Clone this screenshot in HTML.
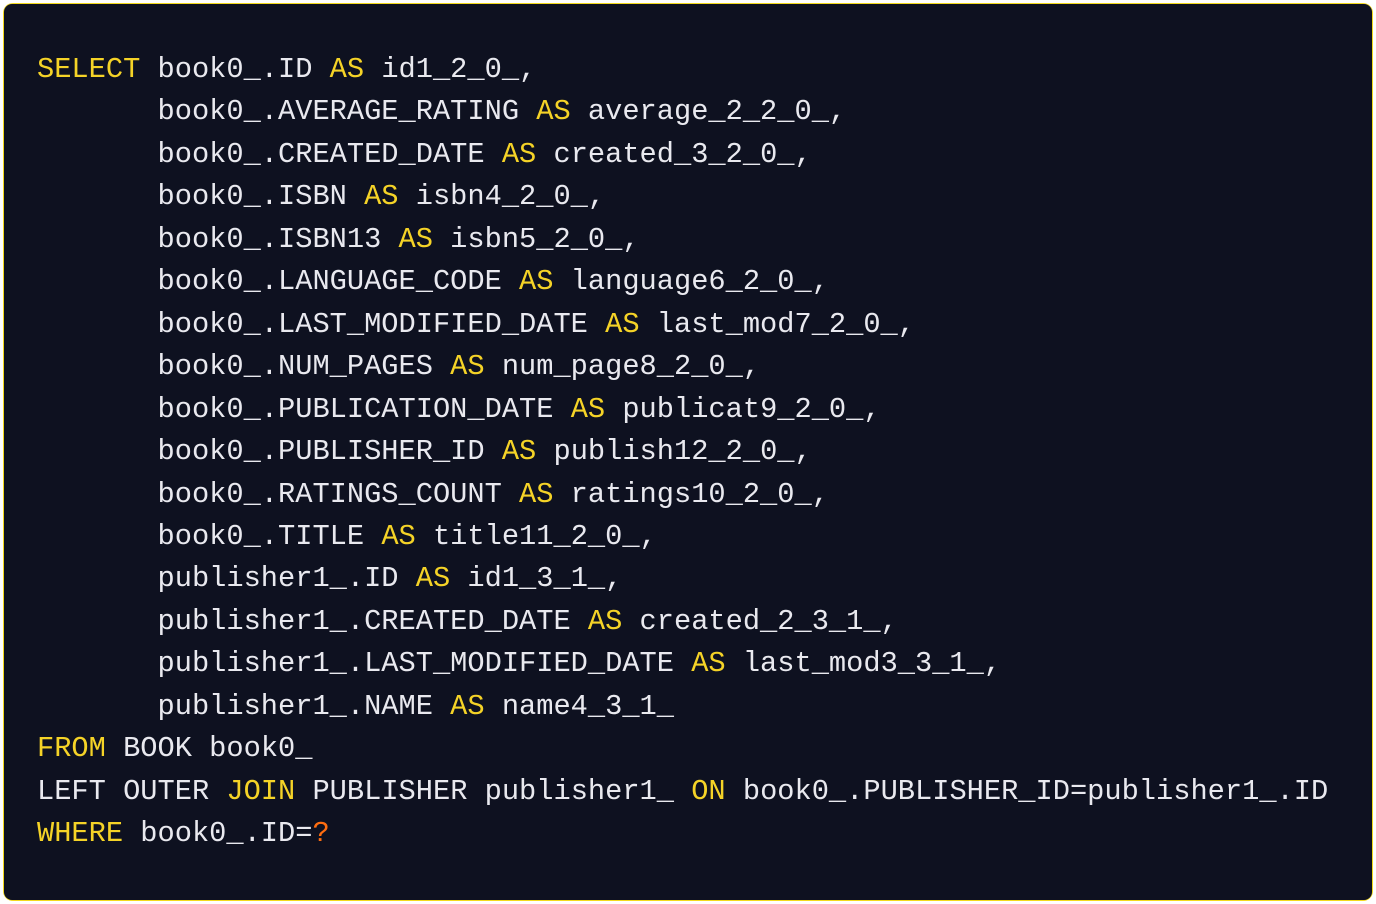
<!DOCTYPE html>
<html><head><meta charset="utf-8"><style>
html,body{margin:0;padding:0;background:#fff;width:1376px;height:904px;overflow:hidden}
.wrap{position:absolute;left:3px;top:3px;width:1370px;height:898px;border-radius:10px;background:#f2d91c}
.box{position:absolute;left:4px;top:4px;width:1368px;height:896px;border-radius:8px;background:#0e1120}
pre{margin:0;position:absolute;left:33px;top:45px;font-family:"Liberation Mono","DejaVu Sans Mono",monospace;font-size:28.7px;line-height:42.45px;color:#e9e9ef}
.k{color:#f5d327}.o{color:#ff6d10}
</style></head><body><div class="wrap"></div><div class="box"><pre><span class="k">SELECT</span> book0_.ID <span class="k">AS</span> id1_2_0_,
       book0_.AVERAGE_RATING <span class="k">AS</span> average_2_2_0_,
       book0_.CREATED_DATE <span class="k">AS</span> created_3_2_0_,
       book0_.ISBN <span class="k">AS</span> isbn4_2_0_,
       book0_.ISBN13 <span class="k">AS</span> isbn5_2_0_,
       book0_.LANGUAGE_CODE <span class="k">AS</span> language6_2_0_,
       book0_.LAST_MODIFIED_DATE <span class="k">AS</span> last_mod7_2_0_,
       book0_.NUM_PAGES <span class="k">AS</span> num_page8_2_0_,
       book0_.PUBLICATION_DATE <span class="k">AS</span> publicat9_2_0_,
       book0_.PUBLISHER_ID <span class="k">AS</span> publish12_2_0_,
       book0_.RATINGS_COUNT <span class="k">AS</span> ratings10_2_0_,
       book0_.TITLE <span class="k">AS</span> title11_2_0_,
       publisher1_.ID <span class="k">AS</span> id1_3_1_,
       publisher1_.CREATED_DATE <span class="k">AS</span> created_2_3_1_,
       publisher1_.LAST_MODIFIED_DATE <span class="k">AS</span> last_mod3_3_1_,
       publisher1_.NAME <span class="k">AS</span> name4_3_1_
<span class="k">FROM</span> BOOK book0_
LEFT OUTER <span class="k">JOIN</span> PUBLISHER publisher1_ <span class="k">ON</span> book0_.PUBLISHER_ID=publisher1_.ID
<span class="k">WHERE</span> book0_.ID=<span class="o">?</span></pre></div></body></html>
